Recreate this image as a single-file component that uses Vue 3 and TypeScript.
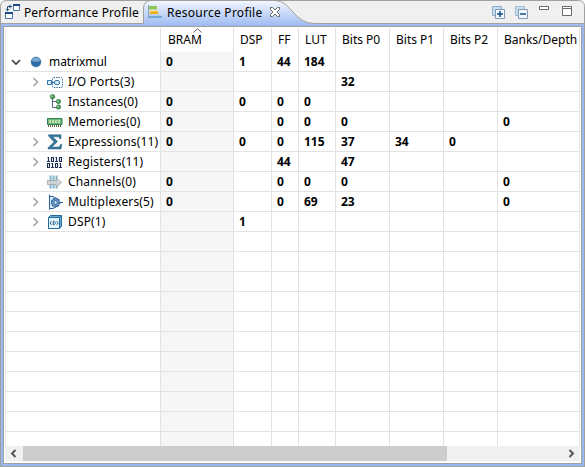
<script setup lang="ts">
interface Row {
  name: string
  icon: string
  expandable?: boolean
  values: string[]
}

const headers: string[] = ['', 'BRAM', 'DSP', 'FF', 'LUT', 'Bits P0', 'Bits P1', 'Bits P2', 'Banks/Depth']

const rows: Row[] = [
  { name: 'matrixmul', icon: 'root', values: ['0', '1', '44', '184', '', '', '', ''] },
  { name: 'I/O Ports(3)', icon: 'ports', expandable: true, values: ['', '', '', '', '32', '', '', ''] },
  { name: 'Instances(0)', icon: 'instances', values: ['0', '0', '0', '0', '', '', '', ''] },
  { name: 'Memories(0)', icon: 'memories', values: ['0', '', '0', '0', '0', '', '', '0'] },
  { name: 'Expressions(11)', icon: 'sigma', expandable: true, values: ['0', '0', '0', '115', '37', '34', '0', ''] },
  { name: 'Registers(11)', icon: 'registers', expandable: true, values: ['', '', '44', '', '47', '', '', ''] },
  { name: 'Channels(0)', icon: 'channels', values: ['0', '', '0', '0', '0', '', '', '0'] },
  { name: 'Multiplexers(5)', icon: 'mux', expandable: true, values: ['0', '', '0', '69', '23', '', '', '0'] },
  { name: 'DSP(1)', icon: 'dsp', expandable: true, values: ['', '1', '', '', '', '', '', ''] },
]

const blanks = 11
for (let i = 0; i < blanks; i++) {
  rows.push({ name: '', icon: '', values: ['', '', '', '', '', '', '', ''] })
}
</script>

<template>
  <div class="view">
    <div class="tabs">
      <svg class="tab-shape" width="585" height="27" viewBox="0 0 585 27">
        <defs>
          <linearGradient id="active" x1="0" y1="0" x2="0" y2="1">
            <stop offset="0" stop-color="#f3f6fd" />
            <stop offset="0.35" stop-color="#d3e0fa" />
            <stop offset="1" stop-color="#99b8f0" />
          </linearGradient>
        </defs>
        <path d="M0 27V5.5L5.5 0H579.500L585 5.500V27Z" fill="#f0f0f0" />
        <path d="M.5 27V6.500Q.5 .5 6.500 .5H578.500Q584.500 .5 584.500 6.500V27" fill="none" stroke="#a0a0a0" />
        <path d="M1 24H143.500V8Q144 1 151 1H275C291 1 294 23.500 314 23.500H584V27H1Z" fill="url(#active)" />
        <path d="M1 23.500H143.500V8Q144 .5 151 .5H275C291 .5 294 23.500 314 23.500H584" fill="none" stroke="#a0a0a0" />
        <path d="M3 26.500H582" stroke="#a0a0a0" />
      </svg>
      <div class="tab first">
        <svg width="16" height="16" viewBox="0 0 16 16">
          <g fill="#fff" stroke="#4774a6"><path d="M8.500 1.500h6v5h-6zM.5 9.500h7v5h-7z" /></g>
          <path d="M8 0h7v2H8zM0 8h8v2H0z" fill="#204a87" />
          <path d="M7 2.500H2.500V7M5.500 .8 4 2.500 5.500 4.200M.8 5 2.500 6.700 4.200 5" fill="none" stroke="#1f4e79" />
        </svg>
        <span>Performance Profile</span>
      </div>
      <div class="tab second">
        <svg width="16" height="16" viewBox="0 0 16 16">
          <path d="M1.500 0v14" stroke="#8ba4c0" />
          <path d="M2 1h8v3H2z" fill="#8fc35b" /><path d="M2 4h8v1H2z" fill="#c3dea4" />
          <path d="M3 6h8v3H3z" fill="#f0ad16" /><path d="M2 5.500h9v1H2z" fill="#ffe17b" />
          <path d="M2 10h13v3H2z" fill="#75a8ce" /><path d="M2 10h13v1H2z" fill="#add0e6" />
        </svg>
        <span>Resource Profile</span>
        <svg class="close" width="12" height="12" viewBox="0 0 12 12">
          <path d="M1.500 1.500h2L6 4l2.500-2.500h2v2L8 6l2.500 2.500v2h-2L6 8l-2.500 2.500h-2v-2L4 6 1.500 3.500z" fill="#fff" stroke="#686868" />
        </svg>
      </div>
      <div class="actions">
        <svg class="box" width="14" height="14" viewBox="0 0 14 14">
          <path d="M.5 9.500v-9h9v3h-6v6z" fill="#c5dff0" stroke="#8fa9c7" />
          <path d="M3.500 3.500h9v9h-9z" fill="#eef8fd" stroke="#8399b7" />
          <path d="M5 8h6M8 5v6" stroke="#164a82" stroke-width="1.500" />
        </svg>
        <svg class="box" width="14" height="14" viewBox="0 0 14 14">
          <path d="M.5 9.500v-9h9v3h-6v6z" fill="#c5dff0" stroke="#9fbad2" />
          <path d="M3.500 3.500h9v9h-9z" fill="#eef8fd" stroke="#8399b7" />
          <path d="M5 8h6" stroke="#164a82" stroke-width="1.500" />
        </svg>
        <svg class="min" width="10" height="10" viewBox="0 0 10 10"><path d="M.5 .5h9v3h-9z" fill="#fff" stroke="#696969" /></svg>
        <svg class="max" width="10" height="10" viewBox="0 0 10 10"><path d="M.5 .5h9v9h-9zM0 2.500h10" fill="#fff" stroke="#696969" /></svg>
      </div>
    </div>

    <div class="frame">
      <div class="content">
        <div class="table">
          <div class="row head">
            <div v-for="(h, i) in headers" :key="i" class="cell">
              <span>{{ h }}</span>
              <svg v-if="h === 'BRAM'" class="sort" width="9" height="5" viewBox="0 0 9 5"><path d="M.5 4.500 4.500 .7l4 3.800" fill="none" stroke="#666" /></svg>
            </div>
          </div>
          <div v-for="(r, i) in rows" :key="i" class="row">
            <div class="cell name" :class="{ root: i === 0 }">
              <span class="twist">
                <svg v-if="i === 0" width="10" height="10" viewBox="0 0 10 10"><path d="M1 3l4 4 4-4" fill="none" stroke="#404040" stroke-width="1.700" /></svg>
                <svg v-else-if="r.expandable" width="10" height="10" viewBox="0 0 10 10"><path d="M2.500 1l4 4-4 4" fill="none" stroke="#a0a0a0" stroke-width="1.500" /></svg>
              </span>
              <svg v-if="r.icon" class="icon" width="16" height="16" viewBox="0 0 16 16">
                <g v-if="r.icon === 'root'">
                  <circle cx="8" cy="8" r="5" fill="#2d6ca6" stroke="#4c7fae" stroke-width=".6" />
                  <path d="M4 7a4 3.500 0 0 1 8 0q-4 1.500-8 0z" fill="#79abd2" />
                </g>
                <g v-else-if="r.icon === 'ports'" fill="none" stroke="#3477ad">
                  <path d="M.5 6.500h4v4h-4z" fill="#d6ebf8" /><path d="M4.500 8.500h3" />
                  <rect x="5.500" y="3.500" width="10" height="10" rx="1" stroke="#336fa4" stroke-dasharray="1.500 1" />
                  <rect x="7.500" y="6.500" width="5" height="4" rx="1.500" fill="#d6ebf8" />
                </g>
                <g v-else-if="r.icon === 'instances'">
                  <path d="M5.500 3v10.500H10M5.500 7.500H10" fill="none" stroke="#54657f" />
                  <g fill="#459657" stroke="#2c7945" stroke-width=".6"><circle cx="5.500" cy="2.700" r="2.300" /><circle cx="11.500" cy="7.500" r="2.200" /><circle cx="11.500" cy="13" r="2.200" /></g>
                  <g fill="#8bcb91"><circle cx="5" cy="2.200" r="1" /><circle cx="11" cy="7" r="1" /><circle cx="11" cy="12.500" r="1" /></g>
                </g>
                <g v-else-if="r.icon === 'memories'">
                  <path d="M.5 4.500h14.500v6H.5z" fill="#72b77c" stroke="#2b8050" />
                  <path d="M2 6h2v3H2zM5 6h2v3H5zM8 6h2v3H8zM11 6h2v3h-2z" fill="#c1e3ae" />
                  <path d="M1 12h14" stroke="#6b6331" stroke-width="2" stroke-dasharray="1 1" />
                </g>
                <g v-else-if="r.icon === 'sigma'">
                  <path d="M1.500 .8h12.500v4h-1.200l-1-2H5.800L10.500 7.500 5 13h7l1.500-2.500H15L14 15H1v-1.200L7 8 1.500 2z" fill="#347b9d" stroke="#245e80" stroke-width=".5" />
                </g>
                <g v-else-if="r.icon === 'registers'" fill="none" stroke="#1f3056" stroke-width="1.150">
                  <path d="M.5 3.500h1V7M0 7.500h3M8.500 3.500h1V7M8 7.500h3M4.500 3.500h2v4h-2zM12.500 3.500h2v4h-2z" />
                  <path d="M.5 9.500h2v4h-2zM8.500 9.500h2v4h-2zM4.500 9.500h1V13M4 13.500h3M12.500 9.500h1V13M12 13.500h3" />
                </g>
                <g v-else-if="r.icon === 'channels'">
                  <path d="M3.500 1.500v13M6.500 1.500v13M9.500 1.500v13" stroke="#80b3cd" stroke-width="2" />
                  <path d="M.5 6.500H9.500V4l5 4.500-5 4.500v-2.500H.5z" fill="#d5d5d3" stroke="#a3a3a3" stroke-width=".8" />
                  <path d="M3.500 7v3M6.500 7v3M9.500 6v5" stroke="#b5cbd5" />
                </g>
                <g v-else-if="r.icon === 'mux'" fill="none" stroke="#295e96">
                  <path d="M2.500 .5v15" /><path d="M2.500 2.500H6l5 3v6l-5 3H2.500z" fill="#dcefff" />
                  <circle cx="8.500" cy="8.500" r="4" fill="#7da9d3" stroke-width="1.500" stroke-dasharray="2 .6" /><circle cx="8.500" cy="8.500" r="1.800" fill="#d7ebfa" /><path d="M12 8.500h4" />
                </g>
                <g v-else>
                  <path d="M1.500 3.500l2-2h11v11l-2 2h-11z" fill="#6eabd0" stroke="#266c9d" />
                  <path d="M1.500 3.500h11v11h-11z" fill="#e2f3fc" stroke="#266c9d" /><path d="M12.500 3.500l2-2" stroke="#266c9d" />
                  <path d="M4.500 7.300 3 9l1.500 1.700M9.700 7.300 11.200 9l-1.500 1.700M6.300 7.300h.9l1 1v1.400l-1 1h-.9z" fill="none" stroke="#235f91" />
                </g>
              </svg>
              <span class="label">{{ r.name }}</span>
            </div>
            <div v-for="(v, j) in r.values" :key="j" class="cell value" :class="{ sorted: j === 0 }">{{ v }}</div>
          </div>
        </div>
        <div class="scroll">
          <svg width="17" height="15" viewBox="0 0 17 15"><path d="M10.500 4 7 7.500l3.500 3.500" fill="none" stroke="#555" stroke-width="2" /></svg>
          <div class="thumb"></div>
          <svg class="right" width="17" height="15" viewBox="0 0 17 15"><path d="M6.500 4 10 7.500 6.500 11" fill="none" stroke="#555" stroke-width="2" /></svg>
        </div>
      </div>
    </div>
  </div>
</template>

<style>
body { margin: 0; background: #fff; overflow: hidden; }
</style>

<style scoped>
.view { width: 585px; height: 467px; display: flex; flex-direction: column; font: 12px/16px "Noto Sans", "Open Sans", sans-serif; color: #000; }
.tabs { position: relative; height: 27px; flex: none; display: flex; box-sizing: border-box; }
.tab-shape { position: absolute; left: 0; top: 0; }
.tab { position: relative; display: flex; height: 25px; white-space: nowrap; }
.tab span { padding-top: 5px; letter-spacing: 0.11px; }
.first { width: 138px; padding-left: 5px; gap: 3px; }
.first svg { margin-top: 4px; }
.second { padding-left: 4px; gap: 4px; }
.second span { letter-spacing: 0.26px; }
.second svg { margin-top: 5px; }
.second .close { margin: 6px 0 0 2px; }
.actions { position: relative; display: flex; margin-left: auto; padding: 6px 13px 0 0; }
.actions .box { margin-right: 9px; }
.actions .min { margin-right: 13px; margin-left: 1px; }
.frame { height: 440px; box-sizing: border-box; border: solid #a0a0a0; border-width: 0 1px 1px; background: #99b8f0; padding: 0 2px 2px; }
.content { height: 437px; box-sizing: border-box; border: solid #a0a0a0; border-width: 0 1px 1px; background: #fff; padding: 1px 1px 0; }
.table { height: 418px; overflow: hidden; border-left: 1px solid #e8e8e8; width: 574px; }
.row { display: grid; grid-template-columns: 155px 73px 38px 27px 37px 54px 54px 54px 82px; height: 20px; }
.cell { box-sizing: border-box; border-right: 1px solid #e2e2e2; border-bottom: 1px solid #e2e2e2; white-space: nowrap; overflow: hidden; min-width: 0; }
.head { height: 24px; }
.head .cell { position: relative; border-bottom: 0; padding: 4px 0 0 7px; }
.head .cell:nth-child(n+3) { padding-left: 6px; }
.sort { position: absolute; left: 32px; top: 0; }
.name { display: flex; padding-left: 25px; }
.name.root { padding-left: 5px; }
.twist { width: 10px; height: 10px; margin: 5px 6px 0 0; }
.name.root .twist { margin-right: 7px; }
.twist svg { display: block; }
.icon { flex: none; margin-top: 2px; margin-right: 5px; }
.label { padding-top: 2px; letter-spacing: 0.16px; }
.root .label { letter-spacing: -0.07px; }
.value { padding: 2px 0 0 5px; font-weight: 700; }
.sorted { background: #f6f6f6; }
.scroll { height: 15px; display: flex; background: #f0f0f0; width: 575px; border-bottom: 1px solid #f8f8f8; }
.thumb { width: 424px; background: #cdcdcd; margin-left: 1px; }
.right { margin-left: auto; }
</style>
